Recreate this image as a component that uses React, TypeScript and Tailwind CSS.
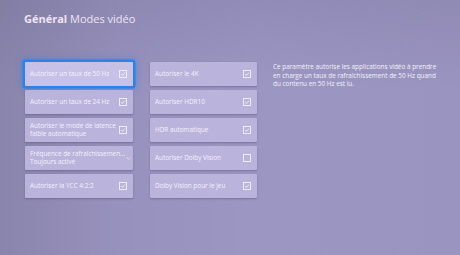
import { ChevronDown } from "lucide-react";

type Tile = {
  label: string;
  sub?: string;
  checked?: boolean;
  select?: boolean;
  focused?: boolean;
};

const leftTiles: Tile[] = [
  { label: "Autoriser un taux de 50 Hz", checked: true, focused: true },
  { label: "Autoriser un taux de 24 Hz", checked: true },
  { label: "Autoriser le mode de latence", sub: "faible automatique", checked: true },
  { label: "Fréquence de rafraîchissemen...", sub: "Toujours activé", select: true },
  { label: "Autoriser la YCC 4:2:2", checked: true },
];

const midTiles: Tile[] = [
  { label: "Autoriser le 4K", checked: true },
  { label: "Autoriser HDR10", checked: true },
  { label: "HDR automatique", checked: true },
  { label: "Autoriser Dolby Vision", checked: false },
  { label: "Dolby Vision pour le jeu", checked: true },
];

function Check({ checked }: { checked?: boolean }) {
  return (
    <svg width="8" height="8" viewBox="0 0 8 8" className="shrink-0">
      <rect x="0.5" y="0.5" width="7" height="7" fill="none" stroke="#f4f0fb" strokeWidth="0.9" />
      {checked && (
        <path d="M2 4.1 L3.4 5.5 L6 2.6" fill="none" stroke="#f4f0fb" strokeWidth="0.9" />
      )}
    </svg>
  );
}

function SettingTile({ tile }: { tile: Tile }) {
  return (
    <div
      className={[
        "flex h-[24px] items-center justify-between rounded-[1px] pl-[5px] pr-[6px] text-[6.4px] leading-[8px] text-[#f5f2fb]",
        tile.focused
          ? "bg-[#c7c1e8] shadow-[0_0_0_2.5px_#2a82ea,0_0_6px_3px_rgba(40,130,240,0.55)]"
          : "bg-[#bab3dc] shadow-[0_1px_2px_rgba(60,50,100,0.35)]",
      ].join(" ")}
    >
      <div className="flex flex-col">
        <span className="whitespace-nowrap">{tile.label}</span>
        {tile.sub && <span className="whitespace-nowrap">{tile.sub}</span>}
      </div>
      {tile.select ? (
        <ChevronDown size={7} strokeWidth={2} className="shrink-0 text-[#f4f0fb]" />
      ) : (
        <Check checked={tile.checked} />
      )}
    </div>
  );
}

export default function App() {
  return (
    <div
      className="h-[255px] w-[460px] overflow-hidden bg-[linear-gradient(90deg,#8a85ac_0%,#9791bd_25%,#9c96c3_55%,#9a94c0_100%)]"
      style={{ fontFamily: '"Open Sans", "Noto Sans", sans-serif' }}
    >
      <div className="h-full w-full bg-[linear-gradient(180deg,rgba(70,70,100,0.12)_0%,rgba(0,0,0,0)_35%)] pl-[24px] pt-[12px]">
        <h1 className="text-[11px] leading-[14px] text-[#efe4f3]">
          <span className="font-bold">Général</span> Modes vidéo
        </h1>
        <div className="mt-[36px] flex">
          <div className="ml-[1px] flex w-[108px] flex-col gap-[4px]">
            {leftTiles.map((t) => (
              <SettingTile key={t.label} tile={t} />
            ))}
          </div>
          <div className="ml-[17px] flex w-[107px] flex-col gap-[4px]">
            {midTiles.map((t) => (
              <SettingTile key={t.label} tile={t} />
            ))}
          </div>
          <p className="ml-[16px] w-[165px] pt-[1px] text-[6.4px] leading-[8.5px] text-[#f5f2fb]">
            Ce paramètre autorise les applications vidéo à prendre en charge un taux de
            rafraîchissement de 50 Hz quand du contenu en 50 Hz est lu.
          </p>
        </div>
      </div>
    </div>
  );
}
